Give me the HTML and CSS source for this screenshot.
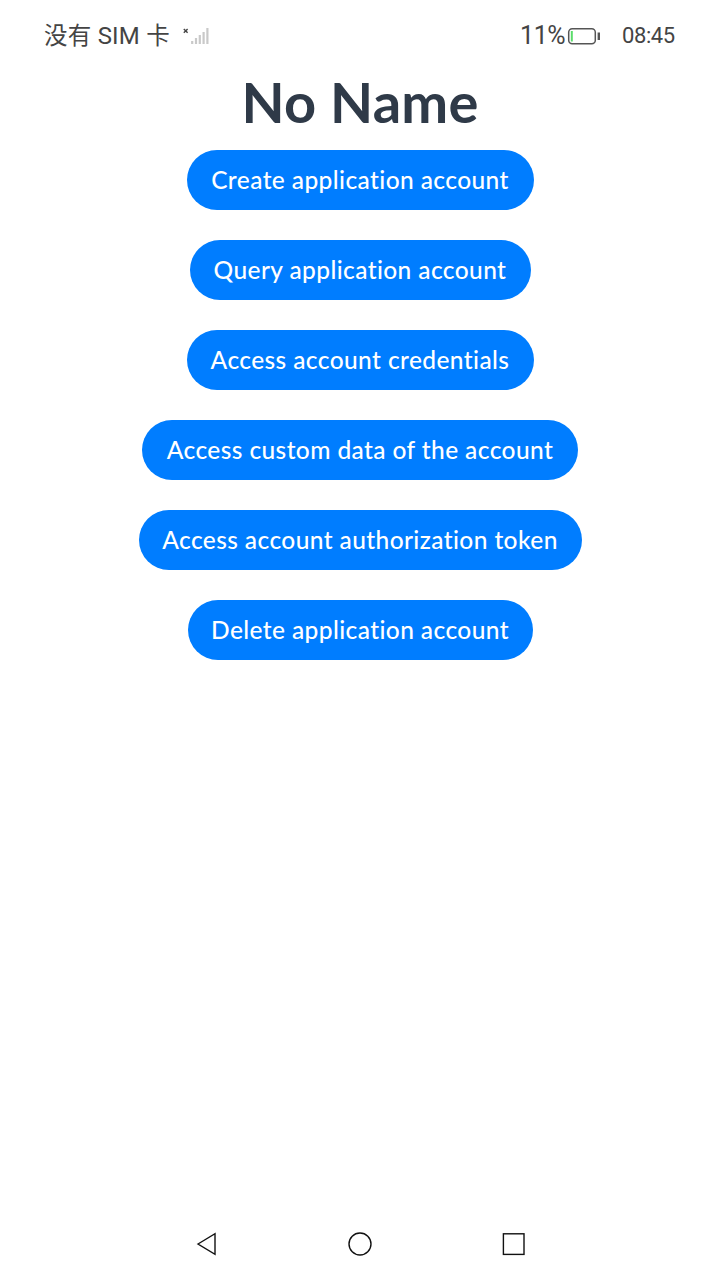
FILE: index.html
```html
<!DOCTYPE html>
<html lang="en">
<head>
<meta charset="utf-8">
<title>No Name</title>
<link rel="stylesheet" href="styles.css">
</head>
<body>
<div class="screen">
  <header class="status">
    <span class="carrier">没有 <span class="sim">SIM</span> 卡</span>
    <svg class="signal" width="28" height="20" viewBox="0 0 28 20">
      <path d="M1.8 3l3.8 3.8M5.6 3l-3.8 3.8" stroke="#444" stroke-width="1.4"/>
      <path d="M10.2 15v3M14 12v6M17.8 9v9M21.6 6v12M25.4 2v16" stroke="#c9c9c9" stroke-width="2.2"/>
    </svg>
    <span class="percent">11%</span>
    <svg class="battery" width="34" height="18" viewBox="0 0 34 18">
      <rect x="1.7" y="1.7" width="26.6" height="15" rx="3.5" fill="none" stroke="#555" stroke-width="1.5"/>
      <rect x="3.8" y="4" width="2" height="10.5" fill="#5bdc6b"/>
      <path d="M31.8 5.5v7.5" stroke="#555" stroke-width="2.4"/>
    </svg>
    <time class="clock">08:45</time>
  </header>
  <main class="content">
    <h1 class="title">No Name</h1>
    <div class="actions">
      <button class="action create">Create application account</button>
      <button class="action query">Query application account</button>
      <button class="action credentials">Access account credentials</button>
      <button class="action custom">Access custom data of the account</button>
      <button class="action token">Access account authorization token</button>
      <button class="action delete">Delete application account</button>
    </div>
  </main>
  <nav class="navbar">
    <svg width="26" height="26" viewBox="0 0 26 26"><path d="M5 13L22 2.7V23.3Z"/></svg>
    <svg width="26" height="26" viewBox="0 0 26 26"><circle cx="13" cy="13" r="11"/></svg>
    <svg width="26" height="26" viewBox="0 0 26 26"><rect x="2.4" y="2.8" width="20.6" height="20.6"/></svg>
  </nav>
</div>
</body>
</html>
```
FILE: styles.css
```css
body {
  margin: 0;
  background: #fff;
  font-family: Lato, "Noto Sans CJK SC", sans-serif;
}
.screen {
  width: 720px;
  height: 1280px;
  display: flex;
  flex-direction: column;
}
.status {
  height: 72px;
  box-sizing: border-box;
  padding: 0 45px 0 44px;
  display: flex;
  align-items: center;
  color: #444;
  white-space: nowrap;
}
.carrier {
  width: 138px;
  font: 400 23.5px/36px Lato, "Noto Sans CJK SC", sans-serif;
  letter-spacing: 0.2px;
  margin-top: -2px;
}
.sim {
  font-family: Roboto, sans-serif;
  font-size: 24px;
}
.percent {
  width: 45px;
  margin-left: auto;
  font: 400 25px/36px Roboto, sans-serif;
  letter-spacing: -0.4px;
}
.battery {
  margin-left: 2px;
}
.clock {
  width: 53px;
  margin-left: 21px;
  font: 400 22px/36px Roboto, sans-serif;
  letter-spacing: -0.4px;
}
.content {
  flex: 1;
  display: flex;
  flex-direction: column;
  align-items: center;
}
.title {
  margin: 0;
  height: 78px;
  font-size: 56px;
  line-height: 60px;
  font-weight: 700;
  letter-spacing: 0.2px;
  color: #2f3a48;
}
.actions {
  display: flex;
  flex-direction: column;
  align-items: center;
  gap: 30px;
}
.action {
  height: 60px;
  padding: 0;
  border: 0;
  border-radius: 30px;
  background: #007dff;
  color: #fff;
  font: 500 24.5px/60px Lato, sans-serif;
  font-variant-ligatures: none;
  letter-spacing: 0.4px;
  white-space: nowrap;
}
.create { width: 347px; }
.query { width: 341px; }
.credentials { width: 347px; }
.custom { width: 436px; }
.token { width: 443px; }
.delete { width: 345px; }
.navbar {
  height: 72px;
  padding: 0 193px;
  display: flex;
  align-items: center;
  justify-content: space-between;
}
.navbar svg {
  fill: none;
  stroke: #111;
  stroke-width: 1.4;
}
```
